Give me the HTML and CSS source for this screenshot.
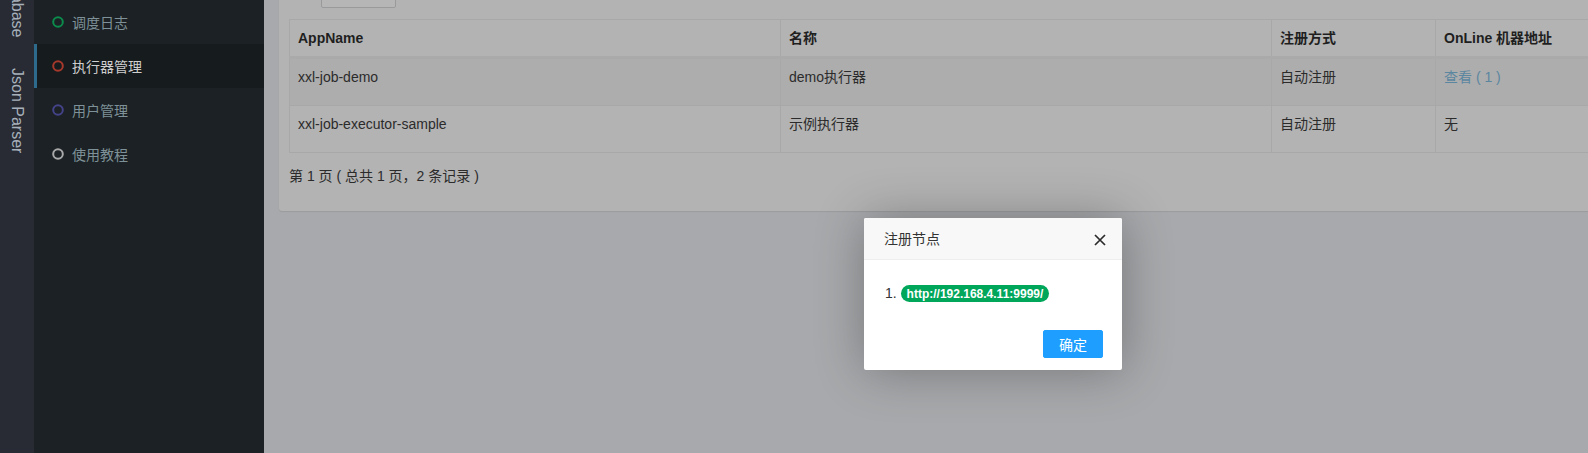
FILE: index.html
```html
<!DOCTYPE html>
<html lang="zh-CN">
<head>
<meta charset="utf-8">
<title>执行器管理</title>
<link rel="stylesheet" href="styles.css">
</head>
<body>
<div class="page">
  <aside class="strip">
    <div class="strip-tab first">Database</div>
    <div class="strip-tab">Json Parser</div>
  </aside>
  <nav class="sidebar">
    <ul class="menu">
      <li class="menu-item">
        <svg class="ico" width="12" height="12" viewBox="0 0 12 12"><circle cx="6" cy="6" r="4.8" fill="none" stroke="#0b8b4c" stroke-width="2"/></svg>
        <span>调度日志</span>
      </li>
      <li class="menu-item active">
        <svg class="ico" width="12" height="12" viewBox="0 0 12 12"><circle cx="6" cy="6" r="4.8" fill="none" stroke="#a7382c" stroke-width="2"/></svg>
        <span>执行器管理</span>
      </li>
      <li class="menu-item">
        <svg class="ico" width="12" height="12" viewBox="0 0 12 12"><circle cx="6" cy="6" r="4.8" fill="none" stroke="#44438a" stroke-width="2"/></svg>
        <span>用户管理</span>
      </li>
      <li class="menu-item">
        <svg class="ico" width="12" height="12" viewBox="0 0 12 12"><circle cx="6" cy="6" r="4.8" fill="none" stroke="#a9a9a9" stroke-width="2"/></svg>
        <span>使用教程</span>
      </li>
    </ul>
  </nav>
  <main class="content">
    <section class="box">
      <div class="toolbar">
        <div class="tool-btn"></div>
      </div>
      <table class="grid">
        <colgroup>
          <col class="c1"><col class="c2"><col class="c3"><col class="c4"><col class="c5">
        </colgroup>
        <thead>
          <tr><th>AppName</th><th>名称</th><th>注册方式</th><th>OnLine 机器地址</th><th></th></tr>
        </thead>
        <tbody>
          <tr class="odd"><td>xxl-job-demo</td><td>demo执行器</td><td>自动注册</td><td><span class="link">查看 ( 1 )</span></td><td></td></tr>
          <tr><td>xxl-job-executor-sample</td><td>示例执行器</td><td>自动注册</td><td>无</td><td></td></tr>
        </tbody>
      </table>
      <div class="pager">第 1 页 ( 总共 1 页，2 条记录 )</div>
    </section>
  </main>
</div>

<div class="layer">
  <div class="layer-title">注册节点
    <svg class="layer-close" width="12" height="12" viewBox="0 0 12 12"><path d="M1 1L11 11M11 1L1 11" stroke="#2b2b2b" stroke-width="1.7" fill="none"/></svg>
  </div>
  <div class="layer-body">1. <span class="badge">http://192.168.4.11:9999/</span></div>
  <div class="layer-btns"><span class="layer-btn">确定</span></div>
</div>
</body>
</html>
```
FILE: styles.css
```css
html, body {
  margin: 0;
  padding: 0;
  width: 1588px;
  height: 453px;
  overflow: hidden;
  background: #a8a9ac;
  font-family: "Liberation Sans", "Noto Sans CJK SC", sans-serif;
  font-size: 14px;
  color: #2a2a2a;
}

.page {
  display: flex;
  height: 453px;
}

/* left vertical tab strip */
.strip {
  width: 34px;
  flex: none;
  background: #282b34;
  display: flex;
  flex-direction: column;
  align-items: center;
  overflow: hidden;
}
.strip-tab {
  writing-mode: vertical-rl;
  font-size: 16px;
  line-height: 18px;
  color: #a7b0ba;
  padding: 15px 0;
  white-space: nowrap;
}
.strip-tab.first {
  margin-top: -46px;
}

/* sidebar */
.sidebar {
  width: 230px;
  flex: none;
  background: #1b2124;
}
.menu {
  list-style: none;
  margin: 0;
  padding: 0;
}
.menu-item {
  height: 44px;
  display: flex;
  align-items: center;
  padding-left: 15px;
  border-left: 3px solid transparent;
  color: #7f9198;
}
.menu-item .ico {
  margin-right: 8px;
  flex: none;
}
.menu-item.active {
  background: #161b1d;
  border-left-color: #2e6a8b;
  color: #cfcfcf;
}

/* content */
.content {
  flex: none;
  width: 1600px;
  padding: 0 15px;
}
.box {
  width: 1500px;
  margin-top: -27px;
  background: #b3b3b3;
  border-radius: 3px;
  box-shadow: 0 1px 1px rgba(0, 0, 0, 0.08);
  padding: 0 10px 25px 10px;
}
.toolbar {
  height: 34px;
  margin-bottom: 12px;
  display: flex;
}
.tool-btn {
  margin-left: 32px;
  width: 73px;
  height: 33px;
  border: 1px solid #999a9b;
  background: #b6b6b6;
  border-radius: 0 0 2px 2px;
}

.grid {
  border-collapse: collapse;
  table-layout: fixed;
  width: 1480px;
  border: 1px solid #a9a9a9;
}
.grid .c1 { width: 491px; }
.grid .c2 { width: 491px; }
.grid .c3 { width: 164px; }
.grid .c4 { width: 200px; }
.grid th, .grid td {
  border: 1px solid #a8a8a8;
  padding: 8px;
  line-height: 20px;
  text-align: left;
  vertical-align: top;
  white-space: nowrap;
}
.grid th {
  font-weight: bold;
  color: #1f1f1f;
  border-bottom: 3px solid #aaaaaa;
  height: 20px;
}
.grid td {
  height: 30px;
  color: #2b2b2b;
}
.grid tr.odd td {
  background: #adadad;
}
.link {
  color: #5b86a0;
}
.pager {
  margin-top: 13px;
  line-height: 20px;
  color: #2b2b2b;
}

/* modal layer */
.layer {
  position: absolute;
  left: 864px;
  top: 218px;
  width: 258px;
  background: #ffffff;
  border-radius: 2px;
  box-shadow: 1px 1px 50px rgba(0, 0, 0, 0.3);
}
.layer-title {
  position: relative;
  height: 41px;
  line-height: 42px;
  padding: 0 80px 0 20px;
  background: #f8f8f8;
  border-bottom: 1px solid #eeeeee;
  border-radius: 2px 2px 0 0;
  color: #333333;
  font-size: 14px;
}
.layer-close {
  position: absolute;
  left: 230px;
  top: 16px;
}
.layer-body {
  padding: 24px 20px 18px 21px;
  line-height: 18px;
  color: #333333;
}
.badge {
  display: inline-block;
  background: #00a65a;
  color: #ffffff;
  font-weight: bold;
  font-size: 12px;
  line-height: 12px;
  padding: 3px 6px 2px;
  border-radius: 9px;
  vertical-align: 0;
}
.layer-btns {
  display: flex;
  justify-content: flex-end;
  padding: 10px 19px 12px 0;
}
.layer-btn {
  height: 28px;
  line-height: 28px;
  padding: 0 15px;
  background: #1e9fff;
  border: 1px solid #1e9fff;
  box-sizing: border-box;
  border-radius: 2px;
  color: #ffffff;
  font-size: 14px;
}
```
